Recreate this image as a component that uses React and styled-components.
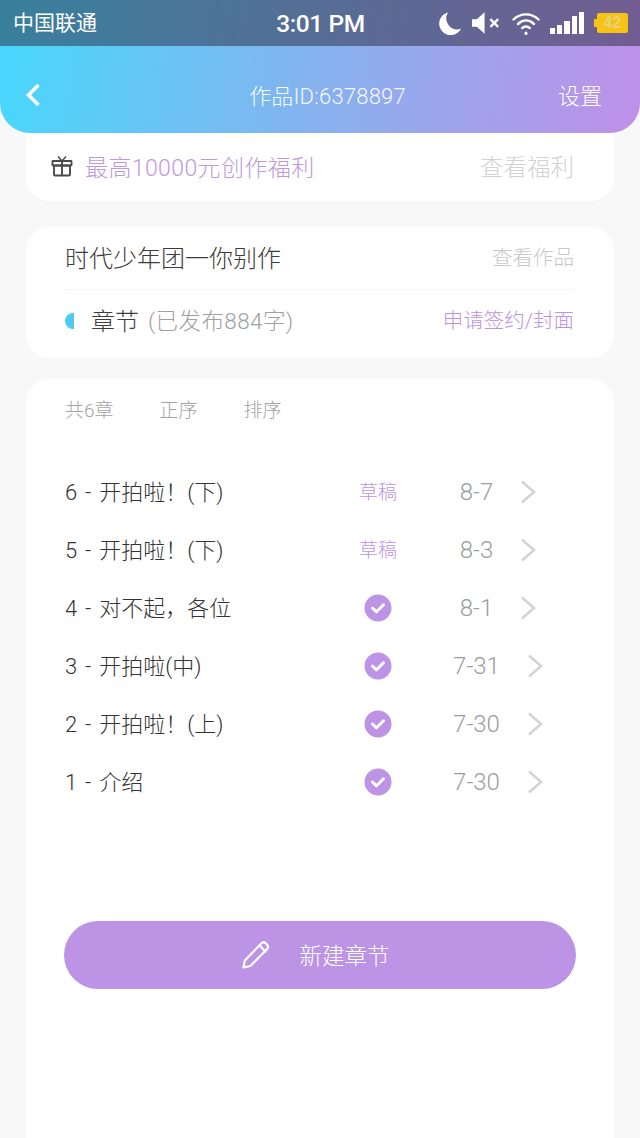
import React from 'react';
import styled, { createGlobalStyle } from 'styled-components';

const GlobalStyle = createGlobalStyle`
  html, body {
    margin: 0;
    padding: 0;
    background: #f8f8f8;
  }
  * {
    box-sizing: border-box;
  }
  body {
    font-family: "Roboto", "Noto Sans CJK SC", sans-serif;
  }
`;

const chapters = [
  { title: '6 - 开拍啦！(下)', draft: true, date: '8-7' },
  { title: '5 - 开拍啦！(下)', draft: true, date: '8-3' },
  { title: '4 - 对不起，各位', date: '8-1' },
  { title: '3 - 开拍啦(中)', date: '7-31' },
  { title: '2 - 开拍啦！(上)', date: '7-30' },
  { title: '1 - 介绍', date: '7-30' },
];

function MoonIcon() {
  return (
    <svg width="24" height="24" viewBox="0 0 25 25">
      <path d="M10.500 1.500A12 12 0 1 0 24 18.500 11.500 11.500 0 0 1 10.500 1.500Z" fill="#fff" />
    </svg>
  );
}

function MuteIcon() {
  return (
    <svg width="30" height="22" viewBox="0 0 31 22">
      <path d="M0 7h5l8-7v22l-8-7H0Z" fill="#fff" />
      <path d="M19 7l8 8M27 7l-8 8" stroke="#fff" strokeWidth="2.400" />
    </svg>
  );
}

function WifiIcon() {
  return (
    <svg width="28" height="23" viewBox="0 0 28 23" fill="none" stroke="#fff" strokeWidth="2.400" strokeLinecap="round">
      <path d="M1.500 7.500C8.500 .6 19.500 .6 26.500 7.500" />
      <path d="M6 12c5-4.600 11-4.600 16 0" />
      <path d="M10.200 16c2.400-1.800 5.200-1.800 7.600 0" />
      <path d="M14 21.500v-.6" strokeWidth="3" />
    </svg>
  );
}

function SignalIcon() {
  return (
    <svg width="34" height="22" viewBox="0 0 34 22" fill="#fff">
      <rect x="0" y="16" width="5" height="6" />
      <rect x="7" y="13" width="5" height="9" />
      <rect x="14" y="9" width="6" height="13" />
      <rect x="22" y="4" width="5" height="18" />
      <rect x="29" y="0" width="5" height="22" />
    </svg>
  );
}

function GiftIcon() {
  return (
    <svg width="22" height="22" viewBox="0 0 22 22" fill="none" stroke="#4a4a4a" strokeWidth="1.900">
      <rect x="1.500" y="6" width="19" height="4.500" rx="0.500" />
      <rect x="3" y="10.500" width="16" height="10" rx="1" />
      <path d="M11 6v14.500" />
      <path d="M11 6 7 1.500M11 6l4-4.500" strokeWidth="1.500" />
    </svg>
  );
}

function PencilIcon() {
  return (
    <svg width="28" height="28" viewBox="0 0 28 28" fill="none" stroke="#fff" strokeWidth="2.200" strokeLinejoin="round" strokeLinecap="round">
      <path d="M1.500 26.500 2.800 19.500 19.500 2.300a3 3 0 0 1 4.200 0l1.400 1.400a3 3 0 0 1 0 4.200L8.400 25Z" />
      <path d="M17.500 4.500l6 6" />
    </svg>
  );
}

function CheckBadge() {
  return (
    <svg width="28" height="28" viewBox="0 0 28 28">
      <circle cx="14" cy="14" r="13.500" fill="#bd93e6" />
      <path d="M8.500 14l4 3.800 7-7" fill="none" stroke="#fff" strokeWidth="3" strokeLinecap="round" strokeLinejoin="round" />
    </svg>
  );
}

function Chevron() {
  return (
    <svg width="16" height="24" viewBox="0 0 16 24" fill="none">
      <path d="M2 1.500 14 12 2 22.500" stroke="#d4d4d4" strokeWidth="2.600" />
    </svg>
  );
}

function App() {
  return (
    <Page>
      <GlobalStyle />
      <Top>
        <StatusBar>
          <Carrier>中国联通</Carrier>
          <Clock>3:01 PM</Clock>
          <StatusIcons>
            <MoonIcon />
            <MuteIcon />
            <WifiIcon />
            <SignalIcon />
            <Battery>
              <BatteryLevel>42</BatteryLevel>
            </Battery>
          </StatusIcons>
        </StatusBar>
        <NavBar>
          <BackIcon width="16" height="24" viewBox="0 0 16 24" fill="none">
            <path d="M13.500 2 3.500 12l10 10" stroke="#fff" strokeWidth="3.600" />
          </BackIcon>
          <NavTitle>作品ID:6378897</NavTitle>
          <NavAction>设置</NavAction>
        </NavBar>
      </Top>

      <Content>
        <BenefitCard>
          <GiftIcon />
          <BenefitText>最高10000元创作福利</BenefitText>
          <BenefitLink>查看福利</BenefitLink>
        </BenefitCard>

        <WorkCard>
          <WorkRow>
            <WorkTitle>时代少年团一你别作</WorkTitle>
            <ViewLink>查看作品</ViewLink>
          </WorkRow>
          <ChapterRow>
            <HalfDot />
            <ChapterLabel>章节</ChapterLabel>
            <ChapterCount>(已发布884字)</ChapterCount>
            <SignLink>申请签约/封面</SignLink>
          </ChapterRow>
        </WorkCard>

        <ListCard>
          <SortBar>
            <SortItem>共6章</SortItem>
            <SortItem>正序</SortItem>
            <SortItem>排序</SortItem>
          </SortBar>
          <ChapterList>
            {chapters.map((c) => (
              <Chapter key={c.title}>
                <ChapterTitle>{c.title}</ChapterTitle>
                <ChapterStatus>
                  {c.draft ? <DraftTag>草稿</DraftTag> : <CheckBadge />}
                </ChapterStatus>
                <ChapterMeta>
                  <ChapterDate>{c.date}</ChapterDate>
                  <Chevron />
                </ChapterMeta>
              </Chapter>
            ))}
          </ChapterList>
          <NewButton>
            <PencilIcon />
            <NewLabel>新建章节</NewLabel>
          </NewButton>
        </ListCard>
      </Content>
    </Page>
  );
}

const Page = styled.div`
  width: 640px;
  height: 1138px;
  overflow: hidden;
  display: flex;
  flex-direction: column;
  background: #f8f8f8;
`;

const Top = styled.header`
  flex: none;
  height: 133px;
  border-radius: 0 0 30px 30px;
  overflow: hidden;
  background: linear-gradient(98deg, #47d8fd 0%, #86b2ee 50%, #bf90e8 100%);
  color: #fff;
`;

const StatusBar = styled.div`
  height: 46px;
  padding: 0 12px 0 13px;
  display: grid;
  grid-template-columns: 1fr auto 1fr;
  align-items: center;
  background: rgba(40, 40, 60, 0.5);
`;

const Carrier = styled.span`
  font-size: 21px;
  font-weight: 400;
  line-height: 46px;
`;

const Clock = styled.span`
  font-size: 24.500px;
  font-weight: 500;
  letter-spacing: -0.4px;
`;

const StatusIcons = styled.div`
  justify-self: end;
  display: flex;
  align-items: center;
  gap: 10px;
`;

const Battery = styled.div`
  position: relative;
  width: 31px;
  height: 20px;
  margin-left: 3px;
  border-radius: 2px;
  background: #f7c312;
  display: flex;
  align-items: center;
  justify-content: center;

  &::before {
    content: "";
    position: absolute;
    left: -3px;
    top: 6px;
    width: 3px;
    height: 8px;
    background: #f7c312;
  }
`;

const BatteryLevel = styled.span`
  font-family: "Liberation Sans", sans-serif;
  font-size: 16px;
  font-weight: 700;
  color: #e8d27a;
`;

const NavBar = styled.nav`
  height: 87px;
  padding: 9px 38px 0 25px;
  display: grid;
  grid-template-columns: 1fr auto 1fr;
  align-items: center;
`;

const BackIcon = styled.svg`
  margin-top: 2px;
`;

const NavTitle = styled.div`
  margin-left: 28px;
  font-size: 22px;
  font-weight: 300;
  letter-spacing: 0.2px;
  opacity: 0.92;
`;

const NavAction = styled.div`
  justify-self: end;
  font-size: 22px;
  font-weight: 300;
`;

const Content = styled.main`
  flex: 1;
  padding: 0 26px;
  display: flex;
  flex-direction: column;
  min-height: 0;
`;

const BenefitCard = styled.section`
  height: 68px;
  padding: 0 40px 2px 25px;
  display: flex;
  align-items: center;
  border-radius: 0 0 24px 24px;
  background: #fff;
`;

const BenefitText = styled.span`
  margin-left: 12px;
  font-size: 23px;
  font-weight: 300;
  letter-spacing: 0.4px;
  color: #bd9ae0;
`;

const BenefitLink = styled.span`
  margin-left: auto;
  font-size: 23.500px;
  font-weight: 300;
  color: #d2d2d2;
`;

const WorkCard = styled.section`
  height: 131px;
  margin-top: 26px;
  padding: 0 40px 0 39px;
  border-radius: 24px;
  background: #fff;
`;

const WorkRow = styled.div`
  height: 63px;
  padding-bottom: 4px;
  display: flex;
  align-items: center;
  justify-content: space-between;
  border-bottom: 1px solid #f6f6f6;
`;

const WorkTitle = styled.span`
  font-size: 24px;
  font-weight: 300;
  color: #3c3c3c;
`;

const ViewLink = styled.span`
  font-size: 20.500px;
  font-weight: 300;
  color: #c9c9c9;
`;

const ChapterRow = styled.div`
  height: 62px;
  padding-bottom: 4px;
  display: flex;
  align-items: center;
`;

const HalfDot = styled.i`
  width: 9px;
  height: 16px;
  margin-top: 3px;
  border-radius: 8px 0 0 8px;
  background: #4fcbf3;
`;

const ChapterLabel = styled.span`
  margin-left: 17px;
  font-size: 24px;
  font-weight: 300;
  color: #3c3c3c;
`;

const ChapterCount = styled.span`
  margin-left: 9px;
  font-size: 22.500px;
  font-weight: 300;
  letter-spacing: 0.4px;
  color: #a0a0a0;
`;

const SignLink = styled.span`
  margin-left: auto;
  font-size: 20.500px;
  font-weight: 300;
  color: #bd93e6;
`;

const ListCard = styled.section`
  flex: 1;
  margin-top: 21px;
  padding: 0 38px;
  border-radius: 24px 24px 0 0;
  background: #fff;
  display: flex;
  flex-direction: column;
`;

const SortBar = styled.div`
  height: 58px;
  padding-left: 1px;
  display: flex;
  align-items: center;
  gap: 46px;
`;

const SortItem = styled.span`
  font-size: 19px;
  font-weight: 300;
  color: #a3a3a3;
`;

const ChapterList = styled.ul`
  list-style: none;
  margin: 26px 0 0;
  padding: 0;
`;

const Chapter = styled.li`
  height: 58px;
  display: flex;
  align-items: center;
`;

const ChapterTitle = styled.span`
  width: 274px;
  padding: 0 0 4px 1px;
  font-size: 22px;
  font-weight: 300;
  word-spacing: 2.500px;
  color: #333;
`;

const ChapterStatus = styled.span`
  width: 80px;
  display: flex;
  justify-content: center;
`;

const DraftTag = styled.span`
  padding-bottom: 4px;
  font-size: 19px;
  font-weight: 300;
  color: #bd93e6;
`;

const ChapterMeta = styled.span`
  width: 130px;
  margin-left: 15px;
  display: flex;
  align-items: center;
  justify-content: center;
  gap: 27px;
`;

const ChapterDate = styled.span`
  font-size: 24px;
  font-weight: 300;
  color: #9c9c9c;
`;

const NewButton = styled.button`
  height: 68px;
  margin-top: 110px;
  padding: 0 8px 0 0;
  border: 0;
  border-radius: 34px;
  background: #bd93e6;
  color: #fff;
  font-family: inherit;
  font-size: 22.500px;
  font-weight: 300;
  display: flex;
  align-items: center;
  justify-content: center;
  gap: 29px;
`;

const NewLabel = styled.span`
  padding-bottom: 2px;
`;

export default App;
